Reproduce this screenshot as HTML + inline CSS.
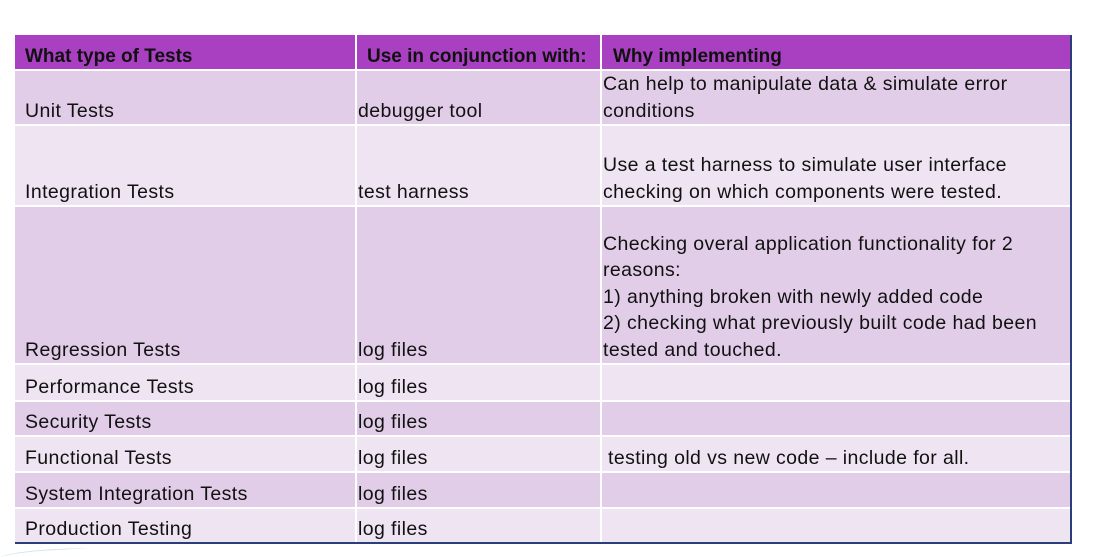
<!DOCTYPE html>
<html><head><style>
body{margin:0;width:1119px;height:557px;background:#fff;position:relative;overflow:hidden;font-family:"Liberation Sans",sans-serif;color:#111;}
.c{position:absolute;display:flex;flex-direction:column;justify-content:flex-end;font-size:19.5px;letter-spacing:0.4px;line-height:26.5px;box-sizing:border-box;white-space:nowrap;}
.h{background:#a93fc1;font-weight:bold;font-size:19px;letter-spacing:0;line-height:24px;}
.o{background:#e1cde8;}
.e{background:#efe5f2;}
</style></head><body>
<div style="position:absolute;left:1070px;top:35px;width:2px;height:509px;background:#2a3f7a"></div>
<div style="position:absolute;left:15px;top:542px;width:1057px;height:2px;background:#2a3f7a"></div>
<svg style="position:absolute;left:0;top:545px" width="120" height="12"><path d="M0 12 Q20 4 90 3 L40 6 Q15 8 0 12Z" fill="#cfe6ee"/></svg>
<div class="c h" style="left:15px;top:35px;width:340px;height:34px;padding-left:10px">What type of Tests</div>
<div class="c h" style="left:357px;top:35px;width:243px;height:34px;padding-left:10px">Use in conjunction with:</div>
<div class="c h" style="left:602px;top:35px;width:468px;height:34px;padding-left:11px">Why implementing</div>

<div class="c o" style="left:15px;top:71px;width:340px;height:53px;padding-left:10px">Unit Tests</div>
<div class="c o" style="left:357px;top:71px;width:243px;height:53px;padding-left:1px">debugger tool</div>
<div class="c o" style="left:602px;top:71px;width:468px;height:53px;padding-left:1px">Can help to manipulate data &amp; simulate error<br>conditions</div>

<div class="c e" style="left:15px;top:126px;width:340px;height:79px;padding-left:10px">Integration Tests</div>
<div class="c e" style="left:357px;top:126px;width:243px;height:79px;padding-left:1px">test harness</div>
<div class="c e" style="left:602px;top:126px;width:468px;height:79px;padding-left:1px">Use a test harness to simulate user interface<br>checking on which components were tested.</div>

<div class="c o" style="left:15px;top:207px;width:340px;height:156px;padding-left:10px">Regression Tests</div>
<div class="c o" style="left:357px;top:207px;width:243px;height:156px;padding-left:1px">log files</div>
<div class="c o" style="left:602px;top:207px;width:468px;height:156px;padding-left:1px">Checking overal application functionality for 2<br>reasons:<br>1) anything broken with newly added code<br>2) checking what previously built code had been<br>tested and touched.</div>

<div class="c e" style="left:15px;top:365px;width:340px;height:35px;padding-left:10px">Performance Tests</div>
<div class="c e" style="left:357px;top:365px;width:243px;height:35px;padding-left:1px">log files</div>
<div class="c e" style="left:602px;top:365px;width:468px;height:35px"></div>

<div class="c o" style="left:15px;top:402px;width:340px;height:33px;padding-left:10px">Security Tests</div>
<div class="c o" style="left:357px;top:402px;width:243px;height:33px;padding-left:1px">log files</div>
<div class="c o" style="left:602px;top:402px;width:468px;height:33px"></div>

<div class="c e" style="left:15px;top:437px;width:340px;height:34px;padding-left:10px">Functional Tests</div>
<div class="c e" style="left:357px;top:437px;width:243px;height:34px;padding-left:1px">log files</div>
<div class="c e" style="left:602px;top:437px;width:468px;height:34px;padding-left:6px">testing old vs new code – include for all.</div>

<div class="c o" style="left:15px;top:473px;width:340px;height:34px;padding-left:10px">System Integration Tests</div>
<div class="c o" style="left:357px;top:473px;width:243px;height:34px;padding-left:1px">log files</div>
<div class="c o" style="left:602px;top:473px;width:468px;height:34px"></div>

<div class="c e" style="left:15px;top:509px;width:340px;height:33px;padding-left:10px">Production Testing</div>
<div class="c e" style="left:357px;top:509px;width:243px;height:33px;padding-left:1px">log files</div>
<div class="c e" style="left:602px;top:509px;width:468px;height:33px"></div>
</body></html>
